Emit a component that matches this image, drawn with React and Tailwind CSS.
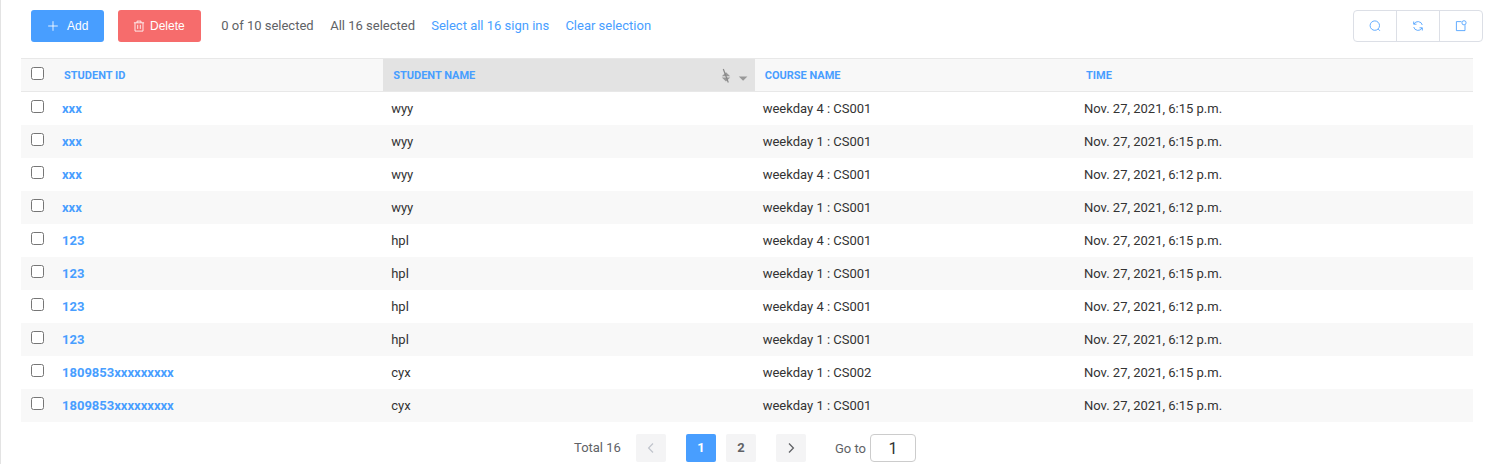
import React from "react";

const rows = [
  ["xxx", "wyy", "weekday 4 : CS001", "Nov. 27, 2021, 6:15 p.m."],
  ["xxx", "wyy", "weekday 1 : CS001", "Nov. 27, 2021, 6:15 p.m."],
  ["xxx", "wyy", "weekday 4 : CS001", "Nov. 27, 2021, 6:12 p.m."],
  ["xxx", "wyy", "weekday 1 : CS001", "Nov. 27, 2021, 6:12 p.m."],
  ["123", "hpl", "weekday 4 : CS001", "Nov. 27, 2021, 6:15 p.m."],
  ["123", "hpl", "weekday 1 : CS001", "Nov. 27, 2021, 6:15 p.m."],
  ["123", "hpl", "weekday 4 : CS001", "Nov. 27, 2021, 6:12 p.m."],
  ["123", "hpl", "weekday 1 : CS001", "Nov. 27, 2021, 6:12 p.m."],
  ["1809853xxxxxxxxx", "cyx", "weekday 1 : CS002", "Nov. 27, 2021, 6:15 p.m."],
  ["1809853xxxxxxxxx", "cyx", "weekday 1 : CS001", "Nov. 27, 2021, 6:15 p.m."],
];

function Icon({ children, className = "size-3" }) {
  return (
    <svg viewBox="0 0 12 12" className={className} fill="none" stroke="currentColor" strokeWidth="0.85">
      {children}
    </svg>
  );
}

function Toolbar() {
  return (
    <div className="flex h-8 items-center pl-[30px] pr-[9px] text-[13px] text-[#606266]">
      <button className="flex h-8 w-[73px] items-center gap-2 rounded-[3px] bg-[#489eff] pl-4 font-['Liberation_Sans',sans-serif] text-xs text-white">
        <Icon>
          <path d="M6 1.2v9.6M1.2 6h9.6" />
        </Icon>
        Add
      </button>
      <button className="ml-3.5 flex h-8 w-[83px] items-center gap-[5px] rounded-[3px] bg-[#f66c6c] pl-[15px] font-['Liberation_Sans',sans-serif] text-xs text-white">
        <Icon>
          <path d="M.9 2.8h10.2M4 2.8V1.1h4v1.7M2 2.8v8.3h8V2.8M4.7 4.8v4.1M7.3 4.8v4.1" />
        </Icon>
        Delete
      </button>
      <span className="ml-[20.2px] w-[109px] whitespace-nowrap">0 of 10 selected</span>
      <span className="w-[101px] whitespace-nowrap">All 16 selected</span>
      <a className="w-[134.2px] whitespace-nowrap text-[#489eff]">Select all 16 sign ins</a>
      <a className="whitespace-nowrap text-[#489eff]">Clear selection</a>
      <div className="ml-auto flex h-8 w-[130px] divide-x divide-[#dcdfe6] rounded-[4px] border border-[#dcdfe6] text-[#489eff]">
        <button className="flex flex-1 items-center justify-center">
          <Icon>
            <circle cx="5.8" cy="5.6" r="4.7" />
            <path d="m9.2 9 1.7 1.8" />
          </Icon>
        </button>
        <button className="flex flex-1 items-center justify-center">
          <Icon>
            <path d="M1.7 1.5v2.7h2.8M1.9 4.1A4.5 4.5 0 0 1 10.3 5M10.3 10.5V7.8H7.5M10.1 7.9A4.5 4.5 0 0 1 1.7 7" />
          </Icon>
        </button>
        <button className="flex flex-1 items-center justify-center">
          <Icon>
            <path d="M6.4 1.6H1.4v9H10V5.2" />
            <circle cx="9" cy="2.8" r="2.1" />
          </Icon>
        </button>
      </div>
    </div>
  );
}

function SortControls() {
  return (
    <span className="ml-auto flex items-center gap-[7px] pr-[7px]">
      <svg viewBox="0 0 10 16" className="h-4 w-2.5">
        <path d="M.8 8.2 5 4.2l4.2 4zM.8 9.5h8.4l-4.2 4z" fill="#999" />
        <path d="m2.3 1 5 13.5" stroke="#888" strokeWidth="1.2" />
      </svg>
      <svg viewBox="0 0 10 16" className="h-4 w-2.5">
        <path d="M.8 8.5h8.6l-4.3 4.3z" fill="#999" />
      </svg>
    </span>
  );
}

const grid = "grid grid-cols-[33px_329px_372px_321px_1fr]";

function Table() {
  return (
    <div className="ml-5 mr-[19px] mt-4 text-[13px] text-[#333]">
      <div className={grid + " h-[34px] border-y border-[#e8e8e8] bg-[#f8f8f8] text-[11px] font-bold text-[#489eff]"}>
        <div className="pl-2.5 pt-2">
          <input type="checkbox" className="block size-[13px]" />
        </div>
        <div className="flex items-center pl-2.5 pt-0.5">STUDENT ID</div>
        <div className="flex items-center bg-[#e3e3e3] pl-[10.2px] pt-0.5">
          STUDENT NAME
          <SortControls />
        </div>
        <div className="flex items-center pl-[9.7px] pt-0.5">COURSE NAME</div>
        <div className="flex items-center pl-2.5 pt-0.5">TIME</div>
      </div>
      {rows.map((row, i) => (
        <div key={i} className={grid + " h-[33px] even:bg-white odd:bg-[#f8f8f8]"}>
          <div className="pl-2.5 pt-2">
            <input type="checkbox" className="block size-[13px]" />
          </div>
          <div className="flex items-center pl-2 font-bold text-[#489eff]">{row[0]}</div>
          <div className="flex items-center pl-[8.2px]">{row[1]}</div>
          <div className="flex items-center pl-[7.7px]">{row[2]}</div>
          <div className="flex items-center pl-2">{row[3]}</div>
        </div>
      ))}
    </div>
  );
}

function Pagination() {
  return (
    <div className="mt-3 flex h-7 items-center pl-[573px] text-[13px] text-[#606266]">
      <span className="w-[62px] whitespace-nowrap">Total 16</span>
      <button className="flex h-7 w-[30px] items-center justify-center rounded-[2px] bg-[#f4f4f5] text-[#c0c4cc]">
        <Icon>
          <path d="M8 1.5 3.6 6 8 10.5" strokeWidth="1.2" />
        </Icon>
      </button>
      <button className="ml-5 h-7 w-[30px] rounded-[2px] bg-[#489eff] font-bold text-white">1</button>
      <button className="ml-2.5 h-7 w-[30px] rounded-[2px] bg-[#f4f4f5] font-bold">2</button>
      <button className="ml-5 flex h-7 w-[30px] items-center justify-center rounded-[2px] bg-[#f4f4f5]">
        <Icon>
          <path d="M4 1.5 8.4 6 4 10.5" strokeWidth="1.3" />
        </Icon>
      </button>
      <span className="ml-[29px] w-[35px] whitespace-nowrap pt-0.5">Go to</span>
      <input
        defaultValue="1"
        className="h-7 w-[46px] rounded-[4px] border border-[#ccc] bg-white text-center text-base text-[#303133]"
      />
    </div>
  );
}

export default function App() {
  return (
    <div className="h-[464px] w-[1492px] overflow-hidden border-l border-[#e3e3e3] bg-white pt-2.5 font-['Roboto',sans-serif]">
      <Toolbar />
      <Table />
      <Pagination />
    </div>
  );
}
